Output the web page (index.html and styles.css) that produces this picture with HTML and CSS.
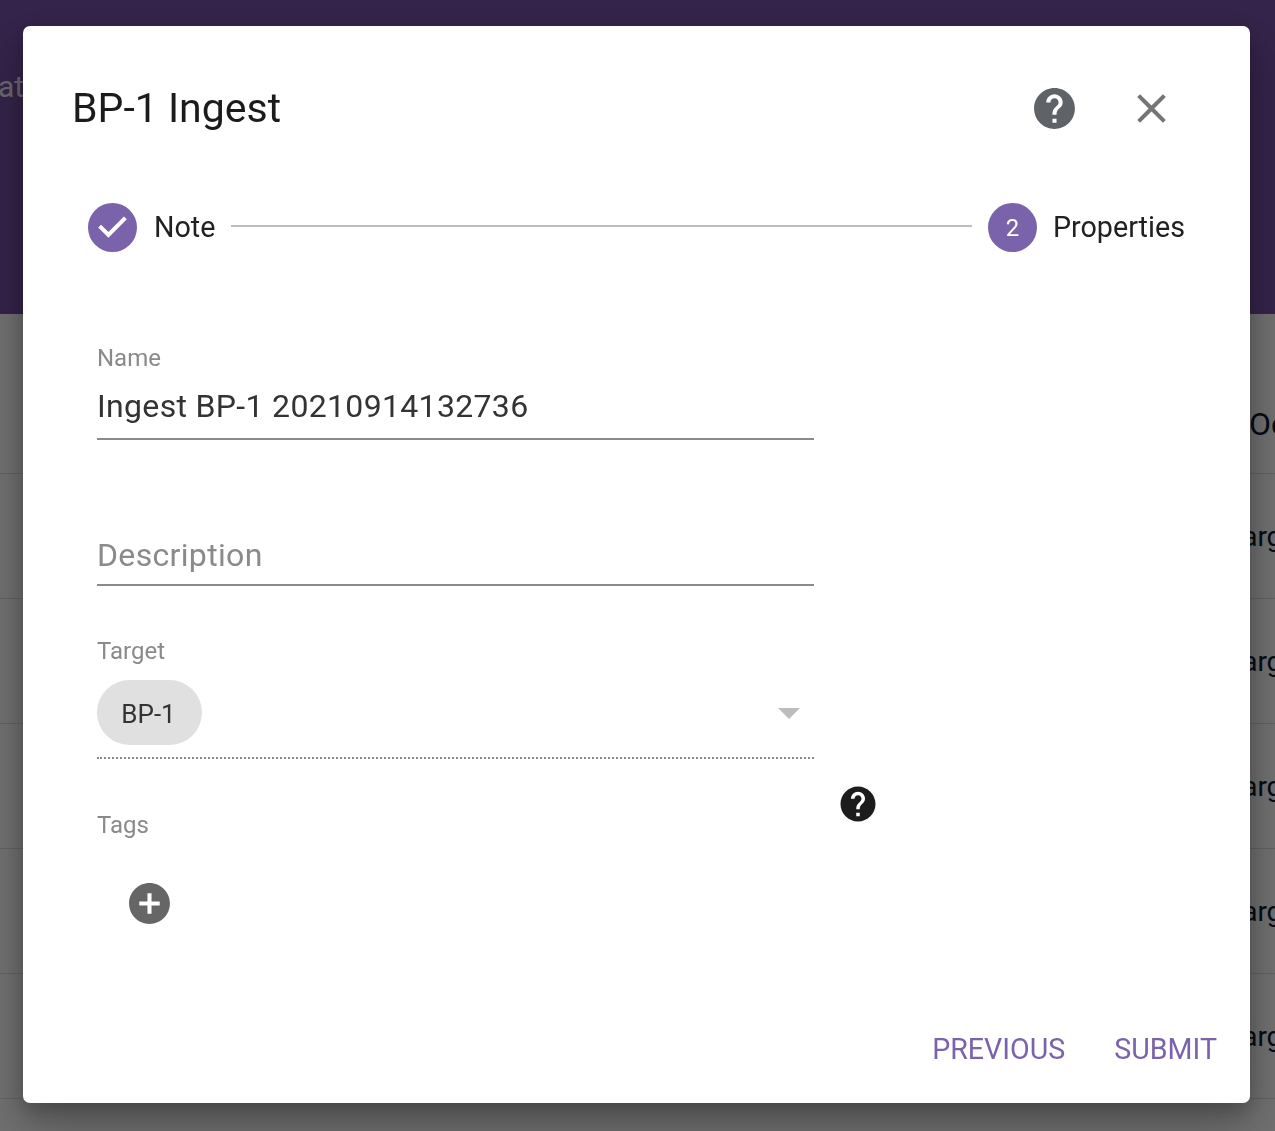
FILE: index.html
```html
<!DOCTYPE html>
<html lang="en">
<head>
<meta charset="utf-8">
<title>BP-1 Ingest</title>
<link rel="stylesheet" href="styles.css">
</head>
<body>
<div class="page">
  <header class="app-header"><span class="app-title">at</span></header>
  <div class="table-head"><span class="cell head-cell">Oc</span></div>
  <div class="row"><span class="cell">Target</span></div>
  <div class="row"><span class="cell">Target</span></div>
  <div class="row"><span class="cell">Target</span></div>
  <div class="row"><span class="cell">Target</span></div>
  <div class="row"><span class="cell">Target</span></div>
</div>
<div class="backdrop"></div>
<section class="modal">
  <div class="modal-head">
    <h1 class="modal-title">BP-1 Ingest</h1>
    <svg class="icon icon-help" viewBox="0 0 24 24"><path d="M12 2C6.48 2 2 6.48 2 12s4.48 10 10 10 10-4.48 10-10S17.52 2 12 2zm1 17h-2v-2h2v2zm2.07-7.75l-.9.92C13.45 12.9 13 13.5 13 15h-2v-.5c0-1.1.45-2.1 1.17-2.83l1.24-1.26c.37-.36.59-.86.59-1.41 0-1.1-.9-2-2-2s-2 .9-2 2H8c0-2.21 1.79-4 4-4s4 1.79 4 4c0 .88-.36 1.68-.93 2.25z"/></svg>
    <svg class="icon icon-close" viewBox="0 0 24 24"><path d="M19 6.41L17.59 5 12 10.59 6.41 5 5 6.41 10.59 12 5 17.59 6.41 19 12 13.41 17.59 19 19 17.59 13.41 12z"/></svg>
  </div>
  <div class="stepper">
    <svg class="step-check" viewBox="0 0 24 24"><path d="M12 0a12 12 0 1 0 0 24 12 12 0 0 0 0-24zm-2 17l-5-5 1.4-1.4 3.6 3.6 7.6-7.6L19 8l-9 9z"/></svg>
    <span class="step-label">Note</span>
    <span class="step-line"></span>
    <span class="step-num">2</span>
    <span class="step-label">Properties</span>
  </div>
  <form class="form">
    <div class="field field-name">
      <label class="field-label">Name</label>
      <div class="field-value">Ingest BP-1 20210914132736</div>
    </div>
    <div class="field field-desc">
      <div class="field-value placeholder">Description</div>
    </div>
    <div class="field field-target">
      <label class="field-label">Target</label>
      <div class="select">
        <span class="chip">BP-1</span>
        <span class="caret"></span>
      </div>
    </div>
    <div class="tags-row">
      <div class="tags">
        <label class="field-label tags-label">Tags</label>
        <svg class="icon icon-add" viewBox="0 0 24 24"><path d="M12 2C6.48 2 2 6.48 2 12s4.48 10 10 10 10-4.48 10-10S17.52 2 12 2zm5 11h-4v4h-2v-4H7v-2h4V7h2v4h4v2z"/></svg>
      </div>
      <svg class="icon icon-tags-help" viewBox="0 0 24 24"><path d="M12 2C6.48 2 2 6.48 2 12s4.48 10 10 10 10-4.48 10-10S17.52 2 12 2zm1 17h-2v-2h2v2zm2.07-7.75l-.9.92C13.45 12.9 13 13.5 13 15h-2v-.5c0-1.1.45-2.1 1.17-2.83l1.24-1.26c.37-.36.59-.86.59-1.41 0-1.1-.9-2-2-2s-2 .9-2 2H8c0-2.21 1.79-4 4-4s4 1.79 4 4c0 .88-.36 1.68-.93 2.25z"/></svg>
    </div>
  </form>
  <div class="actions">
    <span class="action">PREVIOUS</span>
    <span class="action">SUBMIT</span>
  </div>
</section>
</body>
</html>
```

FILE: styles.css
```css
* { box-sizing: border-box; }
html, body { margin: 0; height: 100%; overflow: hidden; }
body { font-family: Roboto, "Liberation Sans", sans-serif; background: #fff; color: #212121; }

.page { height: 1131px; overflow: hidden; }
.app-header { height: 314px; background: #7850a8; padding-top: 69px; }
.app-title { display: block; margin-left: -2px; font-size: 30px; line-height: 36px; color: #fff; opacity: .9; }
.table-head { height: 160px; border-bottom: 1px solid #e0e0e0; padding: 92px 0 0 1249px; white-space: nowrap; }
.row { height: 125px; border-bottom: 1px solid #e0e0e0; padding: 45px 0 0 1227px; white-space: nowrap; }
.cell { font-size: 28px; line-height: 36px; color: #0a1a33; }
.head-cell { font-size: 32px; }

.backdrop { position: fixed; inset: 0; background: rgba(0, 0, 0, .56); }

.modal {
  position: fixed; left: 23px; top: 26px; width: 1227px; height: 1077px;
  display: flex; flex-direction: column;
  background: #fff; border-radius: 7px;
  box-shadow: 0 22px 46px 3px rgba(0,0,0,.25), 0 8px 20px rgba(0,0,0,.2);
}

.modal-head { display: flex; align-items: center; height: 164px; padding: 0 74px 0 49px; }
.modal-title { flex: 1; margin: -1px 0 0; font-size: 41px; font-weight: 400; line-height: 48px; color: #1b1b1b; }
.icon { display: block; flex: none; }
.icon-help { width: 49px; height: 49px; fill: #5f6368; margin-right: 48px; }
.icon-close { width: 49px; height: 49px; fill: #757575; }

.stepper { display: flex; align-items: center; height: 49px; margin-top: 13px; padding: 0 65px; }
.step-check { width: 49px; height: 49px; fill: #7b63ac; flex: none; }
.step-num {
  width: 49px; height: 49px; border-radius: 50%; flex: none;
  display: flex; align-items: center; justify-content: center;
  background: #7b63ac; color: #fff; font-size: 24px;
}
.step-label { margin: -2px 0 0 17px; font-size: 28.7px; line-height: 36px; color: #212121; }
.step-num + .step-label { margin-left: 16px; }
.step-line { flex: 1; height: 2px; margin: -3px 16px 0; background: #bdbdbd; }

.form { display: flex; flex-direction: column; padding: 0 0 0 74px; margin-top: 92px; flex: 1; }
.field { width: 717px; }
.field-label { display: block; font-size: 24px; line-height: 28px; color: #8a8a8a; }
.field-value { font-size: 32px; line-height: 40px; letter-spacing: .33px; color: #333; }
.field-name { height: 96px; border-bottom: 2px solid #8a8a8a; }
.field-name .field-value { margin-top: 14px; }
.field-desc { height: 70px; margin-top: 76px; padding-top: 19px; border-bottom: 2px solid #8a8a8a; }
.placeholder { color: #8a8a8a; }
.field-target { margin-top: 51px; }
.select {
  display: flex; align-items: center; justify-content: space-between;
  height: 94px; padding: 15px 14px 12px 0; border-bottom: 2px dotted #8a8a8a;
}
.chip {
  display: flex; align-items: center; justify-content: center;
  width: 105px; height: 65px; padding: 2px 2px 0 0; border-radius: 33px;
  background: #e0e0e0; font-size: 26px; color: #333;
}
.caret { width: 0; height: 0; margin-top: 2px; border: 11px solid transparent; border-top: 11px solid #bdbdbd; border-bottom: 0; }

.tags-row { display: flex; align-items: flex-start; margin-top: 27px; }
.tags { width: 740px; }
.tags-label { margin-top: 25px; }
.icon-add { width: 49px; height: 49px; fill: #666; margin: 40px 0 0 27.5px; }
.icon-tags-help { width: 42px; height: 42px; fill: #1c1c1c; margin-top: -3px; }

.actions { display: flex; justify-content: flex-end; gap: 49px; padding: 0 33px 36px 0; }
.action { font-size: 28.6px; line-height: 36px; color: #7b63ac; }
```
